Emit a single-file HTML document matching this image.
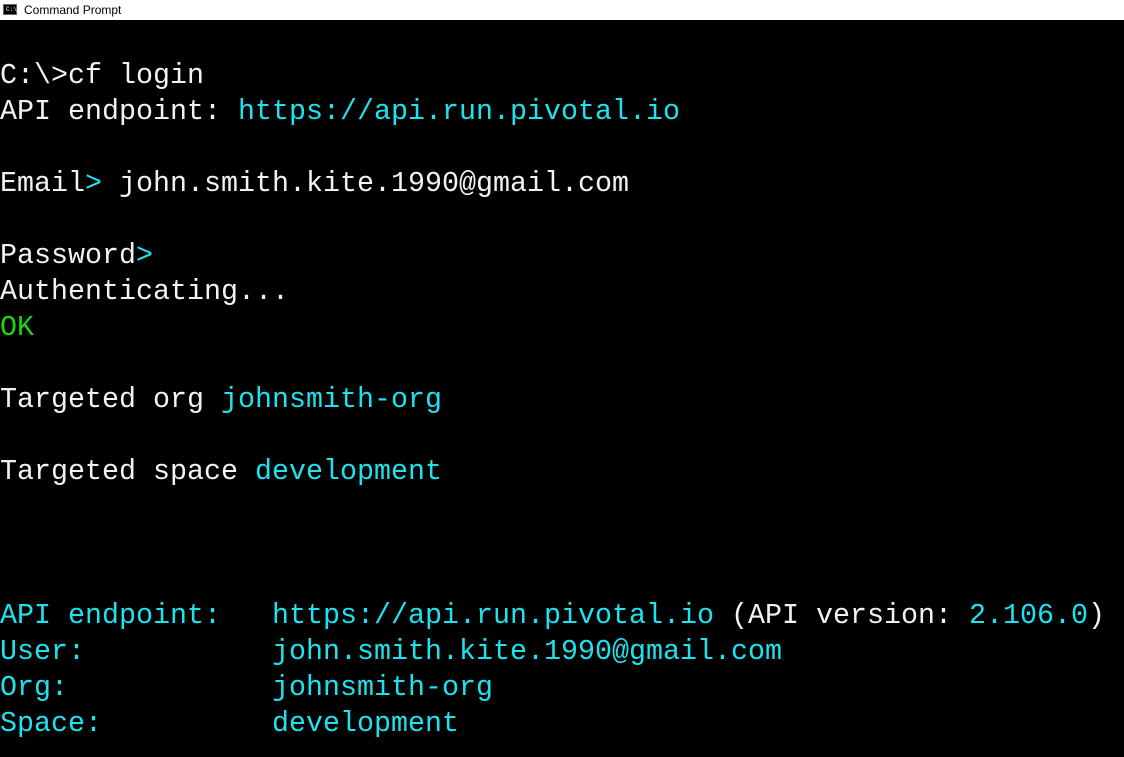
<!DOCTYPE html>
<html><head><meta charset="utf-8"><style>
html,body{margin:0;padding:0;width:1124px;height:757px;overflow:hidden;background:#000;}
.title{position:absolute;left:0;top:0;width:1124px;height:20px;background:#fff;font-family:"Liberation Sans",sans-serif;font-size:12px;color:#000;}
.title span{position:absolute;left:24px;top:3px;}
.icon{position:absolute;left:3px;top:4px;width:14px;height:11px;background:#000;border:1px solid #666;box-sizing:border-box;}
.icon i{position:absolute;left:2px;top:1px;font-style:normal;color:#fff;font-family:"Liberation Mono",monospace;font-size:6px;line-height:8px;}
pre{position:absolute;left:0;top:58px;margin:0;font-family:"Liberation Mono",monospace;font-size:28.33px;line-height:36px;color:#f2f2f2;letter-spacing:0;}
.c{color:#1ee2ee}.g{color:#16d80c}
</style></head><body>
<div class="title"><div class="icon"><i>C:\_</i></div><span>Command Prompt</span></div>
<pre>C:\&gt;cf login
API endpoint: <span class="c">https://api.run.pivotal.io</span>

Email<span class="c">&gt;</span> john.smith.kite.1990@gmail.com

Password<span class="c">&gt;</span>
Authenticating...
<span class="g">OK</span>

Targeted org <span class="c">johnsmith-org</span>

Targeted space <span class="c">development</span>



<span class="c">API endpoint:</span>   <span class="c">https://api.run.pivotal.io</span> (API version: <span class="c">2.106.0</span>)
<span class="c">User:</span>           <span class="c">john.smith.kite.1990@gmail.com</span>
<span class="c">Org:</span>            <span class="c">johnsmith-org</span>
<span class="c">Space:</span>          <span class="c">development</span>
</pre>
</body></html>
